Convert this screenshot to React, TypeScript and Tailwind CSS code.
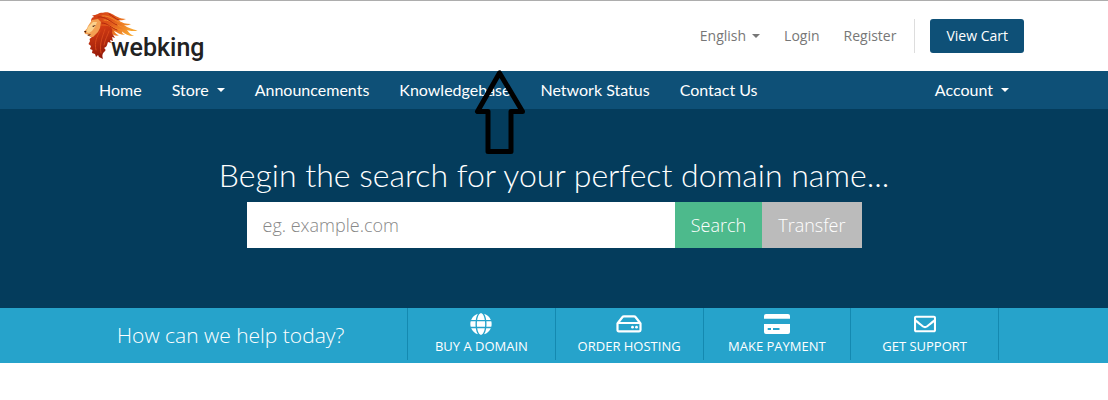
import React from 'react';
import { FaGlobe, FaRegEnvelope } from 'react-icons/fa';

const navItems = [
  { label: 'Home' },
  { label: 'Store', menu: true },
  { label: 'Announcements' },
  { label: 'Knowledgebase' },
  { label: 'Network Status' },
  { label: 'Contact Us' },
];

function DriveIcon({ className }: { className?: string }) {
  return (
    <svg viewBox="0 0 26 22" className={className} aria-hidden="true">
      <path
        d="M1.500 10.500L6.500 4Q7 3.300 8 3.300H18Q19 3.300 19.500 4L24.500 10.500V17Q24.500 18.300 23.200 18.300H2.800Q1.500 18.300 1.500 17ZM2 10H24"
        fill="none"
        stroke="currentColor"
        strokeWidth="2.200"
        strokeLinejoin="round"
      />
      <circle cx="16.500" cy="14.200" r="1.400" fill="currentColor" />
      <circle cx="20.500" cy="14.200" r="1.400" fill="currentColor" />
    </svg>
  );
}

function CardIcon({ className }: { className?: string }) {
  return (
    <svg viewBox="0 0 26 22" className={className} fill="currentColor" aria-hidden="true">
      <path d="M2 1H24Q26 1 26 3V5.700H0V3Q0 1 2 1Z" />
      <path
        fillRule="evenodd"
        d="M0 11H26V19Q26 21 24 21H2Q0 21 0 19ZM3.700 15V17H7V15ZM9 15V17H15.500V15Z"
      />
    </svg>
  );
}

const shortcuts = [
  { label: 'BUY A DOMAIN', Icon: FaGlobe },
  { label: 'ORDER HOSTING', Icon: DriveIcon },
  { label: 'MAKE PAYMENT', Icon: CardIcon },
  { label: 'GET SUPPORT', Icon: FaRegEnvelope },
];

function Caret() {
  return (
    <svg viewBox="0 0 8 4" className="h-1 w-2 fill-current" aria-hidden="true">
      <path d="M0 0h8L4 4z" />
    </svg>
  );
}

function Lion() {
  return (
    <svg viewBox="0 0 54 50" className="h-[50px] w-[54px] shrink-0" aria-hidden="true">
      <defs>
        <linearGradient id="mane" x1="0" y1="0" x2="1" y2="0.3">
          <stop offset="0" stopColor="#cf3a12" />
          <stop offset="0.5" stopColor="#e2571a" />
          <stop offset="1" stopColor="#f7a531" />
        </linearGradient>
        <linearGradient id="beard" x1="0.2" y1="0" x2="0.5" y2="1">
          <stop offset="0" stopColor="#d93f14" />
          <stop offset="1" stopColor="#8f1709" />
        </linearGradient>
      </defs>
      <path
        fill="url(#mane)"
        d="M8 12C6 9 8 6 10 6L8 4C11 5 12 3 14 3C16 1 18 2 20 1.500C22 1 25 1 28 3C32 5 36 8 42 8C39 9.500 36 9.500 34 9C38 12 42 13 47 13C45 14.500 42 14.500 40 14C44 17 48 18 53.500 19.500C50 20.500 46 20 43 19C45 22 47 24 50 25C46 25.500 41 23 38 20.500C38 22 39 23 41 24C36 24 33 21 30 20C31 22 33 24 35 24.500C31 25 29 24 27 22L24 26L14 22Z"
      />
      <path
        fill="url(#beard)"
        d="M15 15L24 15C28 16 29 19 28 22L31 27L28 26L29 30L26 29L27 32L24 31C23 34 23 36 20 37C22 38 22 40 20 41C18 43 18 45 19 48L15 46L14 44L12 46L11 43L8 42L8.500 39L6 38L7 35L4.500 33L6 30L5.500 28L9 25Z"
      />
      <path fill="#f3a052" d="M4 15L8 9L14 8L17 11L16 17L14 21L9 26L6 26L4 23.500L1 23L0 20.500L3 17.500Z" />
      <path fill="#fbd08b" d="M4.500 15.500L9 11L13 11L11 16L8 20L5 22L2 21Z" />
      <path fill="#4a1a0d" d="M0 20L2.500 20L1.500 22ZM3 24L7 23L5 25ZM8 15L12 14L9.500 16Z" />
      <path
        fill="none"
        stroke="#f58a2a"
        strokeWidth="1"
        strokeLinecap="round"
        d="M18 5C26 4 30 10 38 12M20 9C28 9 32 15 41 17M24 14C29 16 32 19 38 19"
      />
      <path
        fill="none"
        stroke="#b3260c"
        strokeWidth="1"
        strokeLinecap="round"
        d="M14 6C22 5 26 11 33 14M18 12C24 12 27 17 33 19M25 3C29 5 31 8 35 9"
      />
      <path
        fill="none"
        stroke="#d9481a"
        strokeWidth="1"
        strokeLinecap="round"
        d="M21 18C19 25 15 32 17 42M16 20C13 26 10 31 12 39M25 20C24 24 21 28 20 34"
      />
    </svg>
  );
}

function Arrow() {
  return (
    <svg
      viewBox="0 0 52 86"
      className="pointer-events-none absolute left-1/2 top-[69px] -ml-[80px] h-[86px] w-[52px]"
      aria-hidden="true"
    >
      <path
        d="M25.500 4L3.500 42.500H14V82.500H37V42.500H48.500Z"
        fill="none"
        stroke="#000"
        strokeWidth="5"
        strokeLinejoin="round"
      />
    </svg>
  );
}

export default function App() {
  return (
    <div className="relative bg-white font-['Open_Sans',sans-serif]">
      <header className="border-t border-[#adadad]">
        <div className="mx-auto flex h-[70px] max-w-[940px] items-center justify-between">
          <a href="#" className="flex items-center" aria-label="webking">
            <Lion />
            <span className="-ml-[27px] pt-6 font-['Roboto',sans-serif] text-[25px] leading-7 font-medium text-[#222]">
              webking
            </span>
          </a>
          <div className="flex items-center text-sm text-[#777]">
            <button type="button" className="mr-6 flex items-center gap-1.5">
              English <Caret />
            </button>
            <a href="#" className="mr-6">Login</a>
            <a href="#">Register</a>
            <div className="ml-[18px] border-l border-[#ddd] pl-[15px]">
              <a href="#" className="block rounded-[3px] bg-[#0e5077] px-4 leading-[34px] text-white">
                View Cart
              </a>
            </div>
          </div>
        </div>
      </header>

      <nav className="bg-[#0e5077] font-['Lato',sans-serif] text-base text-white">
        <div className="mx-auto flex h-[38px] max-w-[940px] items-center justify-between">
          <ul className="flex">
            {navItems.map((item) => (
              <li key={item.label}>
                <a href="#" className="flex items-center gap-2 px-[15px]">
                  {item.label}
                  {item.menu && <Caret />}
                </a>
              </li>
            ))}
          </ul>
          <button type="button" className="flex items-center gap-2 px-[15px]">
            Account <Caret />
          </button>
        </div>
      </nav>

      <main>
        <section className="bg-[#043c5c] px-4 pt-12 pb-[60px]">
          <h1 className="pb-[10px] text-center font-['Lato',sans-serif] text-[32px] leading-[35px] font-light text-white">
            Begin the search for your perfect domain name...
          </h1>
          <form className="mx-auto flex h-[46px] max-w-[615px] text-lg" onSubmit={(e) => e.preventDefault()}>
            <input
              type="text"
              aria-label="Domain name"
              placeholder="eg. example.com"
              className="min-w-0 flex-1 bg-white px-4 font-light text-[#555] outline-none placeholder:text-[#888]"
            />
            <button type="submit" className="bg-[#4dba8c] px-4 font-light text-white">Search</button>
            <button type="button" className="bg-[#bbb] px-4 font-light text-white">Transfer</button>
          </form>
        </section>

        <section className="bg-[#26a3cb] text-white">
          <div className="mx-auto flex h-[55px] max-w-[940px] pr-[25px]">
            <h2 className="flex flex-1 items-center pl-[33px] text-[21px] font-light">How can we help today?</h2>
            <ul className="mb-[3px] grid w-[592px] grid-cols-4 border-r border-[#1489b0]">
              {shortcuts.map(({ label, Icon }) => (
                <li key={label} className="border-l border-[#1489b0]">
                  <a href="#" className="flex flex-col items-center pt-[5px] text-[13px] leading-[22px]">
                    <Icon className="h-[22px] w-auto" aria-hidden="true" />
                    {label}
                  </a>
                </li>
              ))}
            </ul>
          </div>
        </section>
      </main>
      <Arrow />
    </div>
  );
}
